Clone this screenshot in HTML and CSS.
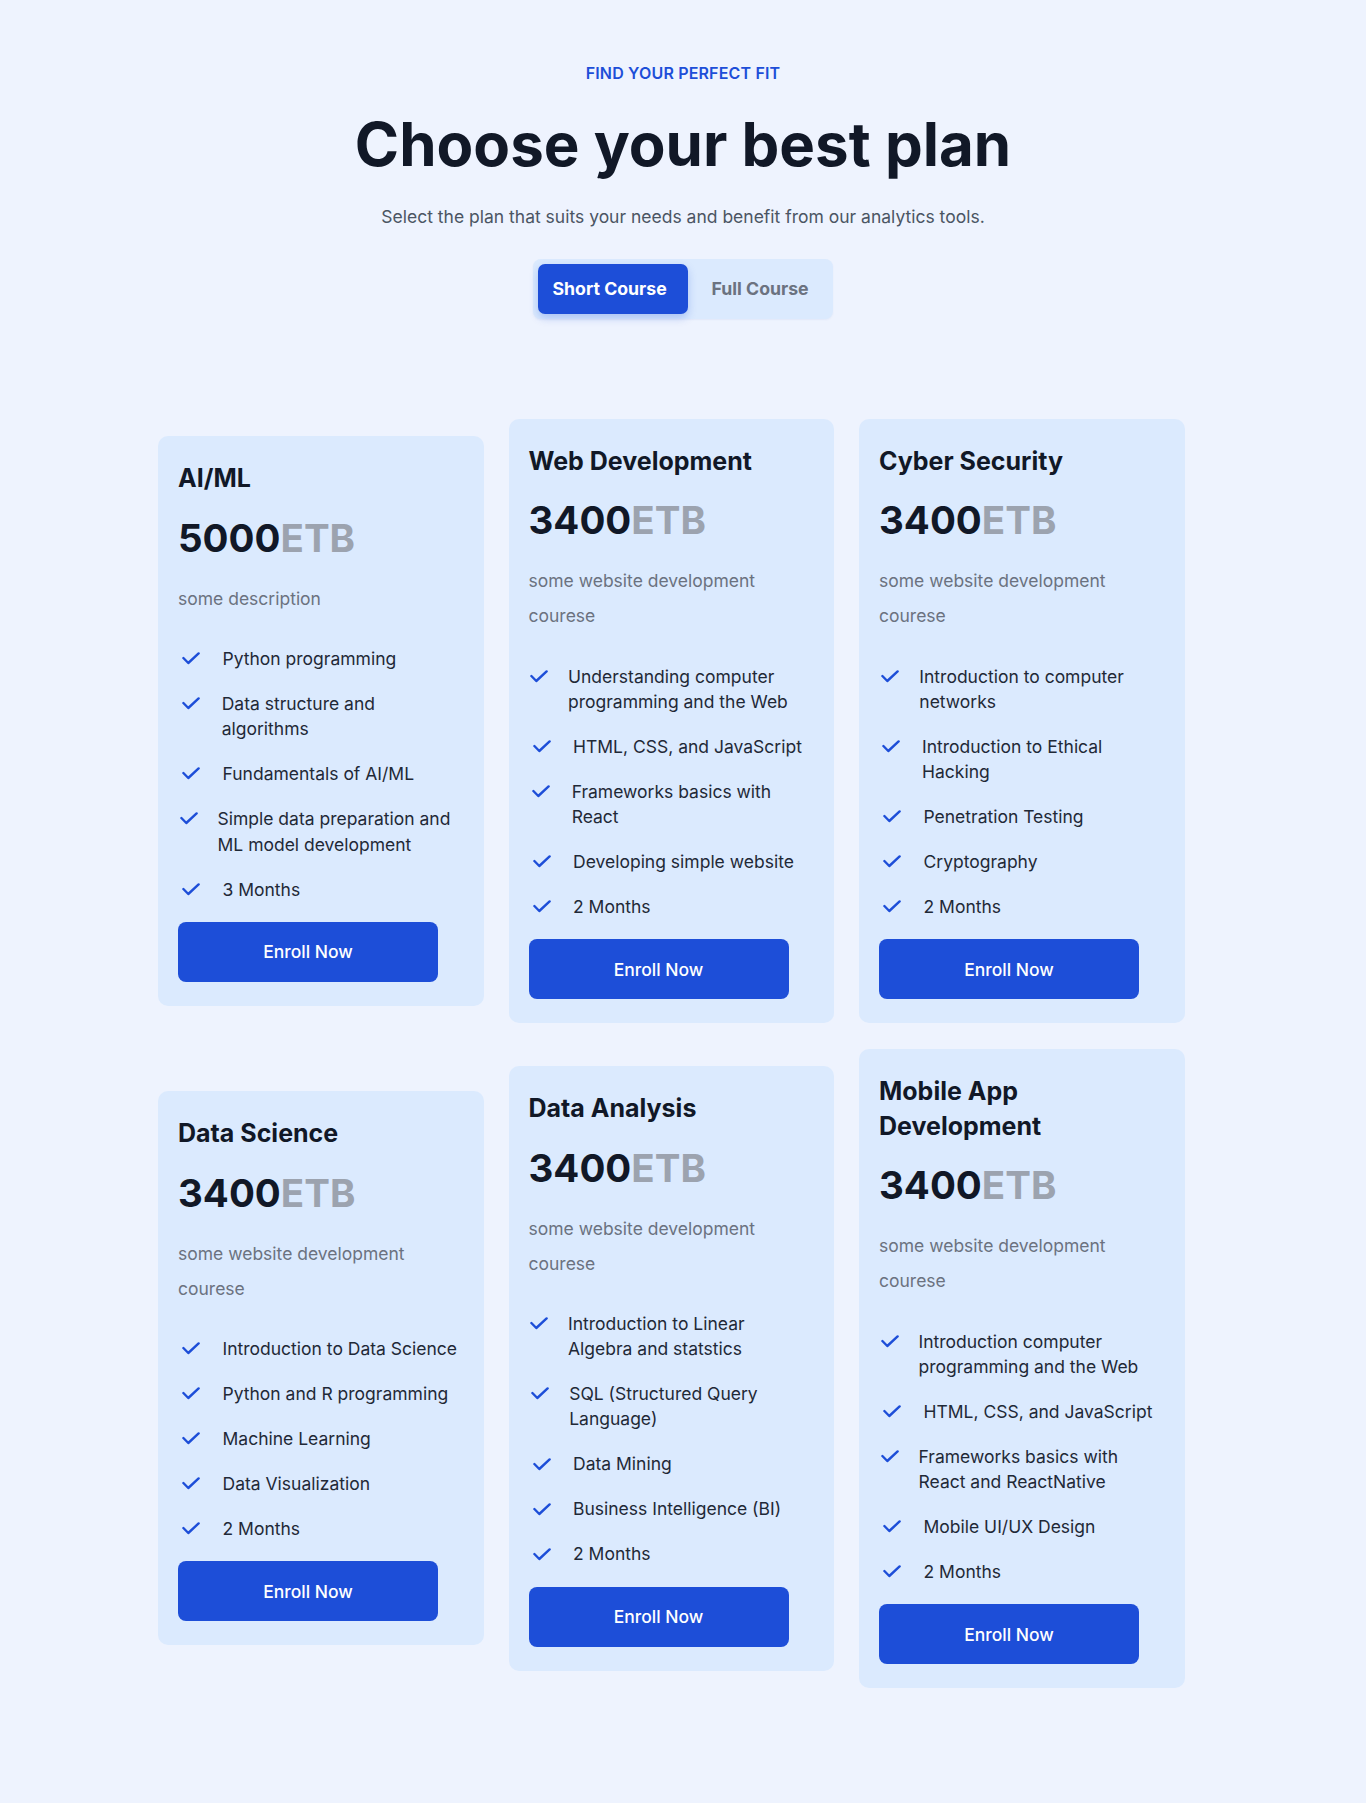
FILE: index.html
```html
<!DOCTYPE html>
<html lang="en">
<head>
<meta charset="utf-8">
<title>Choose your best plan</title>
<link rel="stylesheet" href="styles.css">
</head>
<body>
<main class="page">
  <header class="hero">
    <p class="eyebrow">FIND YOUR PERFECT FIT</p>
    <h1 class="headline">Choose your best plan</h1>
    <p class="lead">Select the plan that suits your needs and benefit from our analytics tools.</p>
    <div class="toggle">
      <button class="toggle-btn active">Short Course</button>
      <button class="toggle-btn">Full Course</button>
    </div>
  </header>

  <section class="plans">
    <article class="card">
      <h3 class="card-title">AI/ML</h3>
      <div class="price"><span class="amount">5000</span><span class="cur">ETB</span></div>
      <p class="desc">some description</p>
      <ul class="features">
        <li><span class="ico"><svg viewBox="0 0 18 13" width="18" height="13"><polyline points="1.4,6 6.3,11 16.6,1.4"/></svg></span><span class="txt">Python programming</span></li>
        <li><span class="ico"><svg viewBox="0 0 18 13" width="18" height="13"><polyline points="1.4,6 6.3,11 16.6,1.4"/></svg></span><span class="txt">Data structure and algorithms</span></li>
        <li><span class="ico"><svg viewBox="0 0 18 13" width="18" height="13"><polyline points="1.4,6 6.3,11 16.6,1.4"/></svg></span><span class="txt">Fundamentals of AI/ML</span></li>
        <li><span class="ico"><svg viewBox="0 0 18 13" width="18" height="13"><polyline points="1.4,6 6.3,11 16.6,1.4"/></svg></span><span class="txt">Simple data preparation and ML model development</span></li>
        <li><span class="ico"><svg viewBox="0 0 18 13" width="18" height="13"><polyline points="1.4,6 6.3,11 16.6,1.4"/></svg></span><span class="txt">3 Months</span></li>
      </ul>
      <button class="enroll">Enroll Now</button>
    </article>

    <article class="card">
      <h3 class="card-title">Web Development</h3>
      <div class="price"><span class="amount">3400</span><span class="cur">ETB</span></div>
      <p class="desc">some website development courese</p>
      <ul class="features">
        <li><span class="ico"><svg viewBox="0 0 18 13" width="18" height="13"><polyline points="1.4,6 6.3,11 16.6,1.4"/></svg></span><span class="txt">Understanding computer programming and the Web</span></li>
        <li><span class="ico"><svg viewBox="0 0 18 13" width="18" height="13"><polyline points="1.4,6 6.3,11 16.6,1.4"/></svg></span><span class="txt">HTML, CSS, and JavaScript</span></li>
        <li><span class="ico"><svg viewBox="0 0 18 13" width="18" height="13"><polyline points="1.4,6 6.3,11 16.6,1.4"/></svg></span><span class="txt">Frameworks basics with React</span></li>
        <li><span class="ico"><svg viewBox="0 0 18 13" width="18" height="13"><polyline points="1.4,6 6.3,11 16.6,1.4"/></svg></span><span class="txt">Developing simple website</span></li>
        <li><span class="ico"><svg viewBox="0 0 18 13" width="18" height="13"><polyline points="1.4,6 6.3,11 16.6,1.4"/></svg></span><span class="txt">2 Months</span></li>
      </ul>
      <button class="enroll">Enroll Now</button>
    </article>

    <article class="card">
      <h3 class="card-title">Cyber Security</h3>
      <div class="price"><span class="amount">3400</span><span class="cur">ETB</span></div>
      <p class="desc">some website development courese</p>
      <ul class="features">
        <li><span class="ico"><svg viewBox="0 0 18 13" width="18" height="13"><polyline points="1.4,6 6.3,11 16.6,1.4"/></svg></span><span class="txt">Introduction to computer networks</span></li>
        <li><span class="ico"><svg viewBox="0 0 18 13" width="18" height="13"><polyline points="1.4,6 6.3,11 16.6,1.4"/></svg></span><span class="txt">Introduction to Ethical Hacking</span></li>
        <li><span class="ico"><svg viewBox="0 0 18 13" width="18" height="13"><polyline points="1.4,6 6.3,11 16.6,1.4"/></svg></span><span class="txt">Penetration Testing</span></li>
        <li><span class="ico"><svg viewBox="0 0 18 13" width="18" height="13"><polyline points="1.4,6 6.3,11 16.6,1.4"/></svg></span><span class="txt">Cryptography</span></li>
        <li><span class="ico"><svg viewBox="0 0 18 13" width="18" height="13"><polyline points="1.4,6 6.3,11 16.6,1.4"/></svg></span><span class="txt">2 Months</span></li>
      </ul>
      <button class="enroll">Enroll Now</button>
    </article>

    <article class="card">
      <h3 class="card-title">Data Science</h3>
      <div class="price"><span class="amount">3400</span><span class="cur">ETB</span></div>
      <p class="desc">some website development courese</p>
      <ul class="features">
        <li><span class="ico"><svg viewBox="0 0 18 13" width="18" height="13"><polyline points="1.4,6 6.3,11 16.6,1.4"/></svg></span><span class="txt">Introduction to Data Science</span></li>
        <li><span class="ico"><svg viewBox="0 0 18 13" width="18" height="13"><polyline points="1.4,6 6.3,11 16.6,1.4"/></svg></span><span class="txt">Python and R programming</span></li>
        <li><span class="ico"><svg viewBox="0 0 18 13" width="18" height="13"><polyline points="1.4,6 6.3,11 16.6,1.4"/></svg></span><span class="txt">Machine Learning</span></li>
        <li><span class="ico"><svg viewBox="0 0 18 13" width="18" height="13"><polyline points="1.4,6 6.3,11 16.6,1.4"/></svg></span><span class="txt">Data Visualization</span></li>
        <li><span class="ico"><svg viewBox="0 0 18 13" width="18" height="13"><polyline points="1.4,6 6.3,11 16.6,1.4"/></svg></span><span class="txt">2 Months</span></li>
      </ul>
      <button class="enroll">Enroll Now</button>
    </article>

    <article class="card">
      <h3 class="card-title">Data Analysis</h3>
      <div class="price"><span class="amount">3400</span><span class="cur">ETB</span></div>
      <p class="desc">some website development courese</p>
      <ul class="features">
        <li><span class="ico"><svg viewBox="0 0 18 13" width="18" height="13"><polyline points="1.4,6 6.3,11 16.6,1.4"/></svg></span><span class="txt">Introduction to Linear Algebra and statstics</span></li>
        <li><span class="ico"><svg viewBox="0 0 18 13" width="18" height="13"><polyline points="1.4,6 6.3,11 16.6,1.4"/></svg></span><span class="txt">SQL (Structured Query Language)</span></li>
        <li><span class="ico"><svg viewBox="0 0 18 13" width="18" height="13"><polyline points="1.4,6 6.3,11 16.6,1.4"/></svg></span><span class="txt">Data Mining</span></li>
        <li><span class="ico"><svg viewBox="0 0 18 13" width="18" height="13"><polyline points="1.4,6 6.3,11 16.6,1.4"/></svg></span><span class="txt">Business Intelligence (BI)</span></li>
        <li><span class="ico"><svg viewBox="0 0 18 13" width="18" height="13"><polyline points="1.4,6 6.3,11 16.6,1.4"/></svg></span><span class="txt">2 Months</span></li>
      </ul>
      <button class="enroll">Enroll Now</button>
    </article>

    <article class="card">
      <h3 class="card-title">Mobile App Development</h3>
      <div class="price"><span class="amount">3400</span><span class="cur">ETB</span></div>
      <p class="desc">some website development courese</p>
      <ul class="features">
        <li><span class="ico"><svg viewBox="0 0 18 13" width="18" height="13"><polyline points="1.4,6 6.3,11 16.6,1.4"/></svg></span><span class="txt">Introduction computer programming and the Web</span></li>
        <li><span class="ico"><svg viewBox="0 0 18 13" width="18" height="13"><polyline points="1.4,6 6.3,11 16.6,1.4"/></svg></span><span class="txt">HTML, CSS, and JavaScript</span></li>
        <li><span class="ico"><svg viewBox="0 0 18 13" width="18" height="13"><polyline points="1.4,6 6.3,11 16.6,1.4"/></svg></span><span class="txt">Frameworks basics with React and ReactNative</span></li>
        <li><span class="ico"><svg viewBox="0 0 18 13" width="18" height="13"><polyline points="1.4,6 6.3,11 16.6,1.4"/></svg></span><span class="txt">Mobile UI/UX Design</span></li>
        <li><span class="ico"><svg viewBox="0 0 18 13" width="18" height="13"><polyline points="1.4,6 6.3,11 16.6,1.4"/></svg></span><span class="txt">2 Months</span></li>
      </ul>
      <button class="enroll">Enroll Now</button>
    </article>
  </section>
</main>
</body>
</html>
```
FILE: styles.css
```css
* { box-sizing: border-box; }

html, body {
  margin: 0;
  padding: 0;
  background: #eef3fe;
}

body {
  font-family: Inter, "Noto Sans", "Liberation Sans", sans-serif;
  color: #111827;
}

.page {
  min-height: 1803px;
  padding: 60.5px 0 100px;
}

.hero {
  display: flex;
  flex-direction: column;
  align-items: center;
  text-align: center;
}

.eyebrow {
  margin: 0;
  font-size: 16px;
  line-height: 24px;
  font-weight: 600;
  letter-spacing: 0.01em;
  color: #1d4ed8;
}

.headline {
  margin: 29px 0 0;
  font-size: 60px;
  line-height: 60px;
  font-weight: 700;
  letter-spacing: 0;
  color: #111827;
}

.lead {
  margin: 29.3px 0 0;
  font-size: 17.5px;
  line-height: 28px;
  color: #4b5563;
}

.toggle {
  margin-top: 28px;
  display: flex;
  width: 300px;
  height: 60px;
  padding: 5px;
  border-radius: 8px;
  background: #dbeafe;
  box-shadow: 0 1px 2px rgba(30, 64, 175, 0.06);
}

.toggle-btn {
  font-family: inherit;
  font-size: 17.7px;
  font-weight: 700;
  border: 0;
  border-radius: 7px;
  background: transparent;
  color: #6b7280;
  height: 50px;
  text-align: left;
  cursor: pointer;
}

.toggle-btn.active {
  width: 150px;
  padding: 0 0 0 14.5px;
  background: #1d4ed8;
  color: #fff;
  box-shadow: 0 4px 8px rgba(29, 78, 216, 0.25);
}

.toggle-btn:not(.active) {
  flex: 1;
  padding: 0 0 0 23.5px;
}

.plans {
  width: 1050px;
  margin: 100px auto 0;
  display: grid;
  grid-template-columns: repeat(3, 325.5px);
  column-gap: 25px;
  row-gap: 25.5px;
  align-items: center;
}

.card {
  background: #dbeafe;
  border-radius: 10px;
  padding: 25px 20px 24px;
}

.card-title {
  margin: 0;
  font-size: 25px;
  line-height: 35px;
  font-weight: 700;
  color: #111827;
}

.price {
  margin-top: 21.3px;
  font-size: 38.5px;
  line-height: 40px;
  font-weight: 700;
}

.amount { color: #111827; }
.cur { color: #9ca3af; }

.desc {
  margin: 23px 0 0;
  font-size: 17.5px;
  line-height: 35px;
  color: #6b7280;
}

.features {
  list-style: none;
  margin: 30.5px 0 20px;
  padding: 0;
  display: flex;
  flex-direction: column;
  gap: 19.8px;
}

.features li {
  display: flex;
  align-items: flex-start;
}

.ico {
  flex: 0 1 26.5px;
  min-width: 21.5px;
  height: 25.2px;
  display: flex;
  align-items: center;
  justify-content: center;
  overflow: visible;
}

.ico svg {
  flex: none;
  display: block;
  fill: none;
  stroke: #1d4ed8;
  stroke-width: 2.4;
  stroke-linecap: round;
  stroke-linejoin: round;
}

.txt {
  margin-left: 18px;
  padding-right: 4px;
  font-size: 17.5px;
  line-height: 25.2px;
  color: #1f2937;
}

.enroll {
  display: block;
  width: 260px;
  height: 60px;
  border: 0;
  border-radius: 8px;
  background: #1d4ed8;
  color: #fff;
  font-family: inherit;
  font-size: 17.5px;
  font-weight: 500;
  cursor: pointer;
}
```
